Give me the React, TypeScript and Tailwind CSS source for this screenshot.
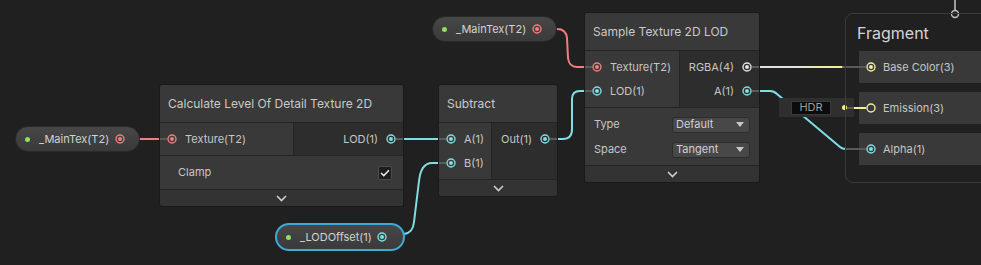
import React from 'react'

const RED = '#ef7f7f'
const CYAN = '#7fdde4'
const YELLOW = '#f3ef98'
const WHITE = '#e2e2e2'

function Ring({ color, hollow = false }: { color: string; hollow?: boolean }) {
  return (
    <svg width="10" height="10" viewBox="0 0 10 10" className="shrink-0">
      <circle cx="5" cy="5" r="4" fill="none" stroke={color} strokeWidth="1.4" />
      {!hollow && <circle cx="5" cy="5" r="2" fill={color} />}
    </svg>
  )
}

function Stub() {
  return <div className="h-[2px] w-[7px] shrink-0 bg-[#5a5a5a]" />
}

function InPort({ label, color }: { label: string; color: string }) {
  return (
    <div className="flex h-6 items-center">
      <Stub />
      <Ring color={color} />
      <span className="ml-2">{label}</span>
    </div>
  )
}

function OutPort({ label, color }: { label: string; color: string }) {
  return (
    <div className="flex h-6 items-center justify-end">
      <span className="mr-2">{label}</span>
      <Ring color={color} />
      <Stub />
    </div>
  )
}

function Chevron() {
  return (
    <div className="flex h-4 items-center justify-center bg-[#333333]">
      <svg width="11" height="7" viewBox="0 0 11 7">
        <polyline points="1,1 5.5,5.5 10,1" fill="none" stroke="#cfcfcf" strokeWidth="1.6" />
      </svg>
    </div>
  )
}

function Title({ text }: { text: string }) {
  return (
    <div className="flex h-[38px] items-center border-b border-[#242424] bg-[#393939] pl-2 text-[12px] text-[#c9c9c9]">
      {text}
    </div>
  )
}

function Dropdown({ value }: { value: string }) {
  return (
    <div className="ml-auto flex h-4 w-[78px] items-center justify-between rounded-[3px] border border-[#2c2c2c] bg-[#484848] pl-[3px] pr-[5px] text-[11px] text-[#d0d0d0]">
      <span>{value}</span>
      <svg width="8" height="5" viewBox="0 0 8 5">
        <polygon points="0,0 8,0 4,5" fill="#c8c8c8" />
      </svg>
    </div>
  )
}

function Pill({ label, color, className, selected = false }: { label: string; color: string; className: string; selected?: boolean }) {
  return (
    <div
      className={`absolute flex items-center rounded-full bg-gradient-to-b from-[#474747] to-[#3a3a3a] text-[11px] text-[#d2d2d2] ${
        selected ? 'border-2 border-[#3fa9d6]' : 'border border-[#2a2a2a]'
      } ${className}`}
    >
      <div className="h-[5px] w-[5px] rounded-full bg-[#8ee05e]" />
      <span className="ml-[9px]">{label}</span>
      <div className="ml-auto">
        <Ring color={color} />
      </div>
    </div>
  )
}

function Edges() {
  return (
    <svg className="absolute inset-0" width="981" height="265" fill="none" strokeLinecap="round">
      <defs>
        <linearGradient id="rgba" gradientUnits="userSpaceOnUse" x1="790" y1="0" x2="842" y2="0">
          <stop offset="0" stopColor={WHITE} />
          <stop offset="1" stopColor={YELLOW} />
        </linearGradient>
      </defs>
      {/* _MainTex -> Texture */}
      <path d="M140,139 L160,139" stroke={RED} strokeWidth="2" />
      {/* LOD -> A */}
      <path d="M403,139 L439,139" stroke={CYAN} strokeWidth="2" />
      {/* _LODOffset -> B */}
      <path d="M404,234 Q413,233 414,222 L419,181 Q421,163 432,163 L439,163" stroke={CYAN} strokeWidth="2" />
      {/* Out -> LOD */}
      <path d="M557,139 L563,139 Q572,139 572,129 L572,99 Q572,91 580,91 L585,91" stroke={CYAN} strokeWidth="2" />
      {/* _MainTex -> Texture (sample) */}
      <path d="M557,29 Q566,29 567,38 L568,58 Q569,67 577,67 L585,67" stroke={RED} strokeWidth="2" />
      {/* RGBA -> Base Color */}
      <path d="M759,67 L843,67" stroke="url(#rgba)" strokeWidth="2" />
      <path d="M843,67 L859,67" stroke="#5a5a5a" strokeWidth="2" />
      {/* A -> Alpha */}
      <path d="M759,91 L770,91 Q774,91 777,94 L840,147 Q842,149 846,149" stroke={CYAN} strokeWidth="2" />
      <path d="M846,149 L859,149" stroke="#5a5a5a" strokeWidth="2" />
      {/* HDR -> Emission */}
      <path d="M854,108 L859,108" stroke={YELLOW} strokeWidth="2" />
      {/* vertex link */}
      <path d="M955,0 L955,10" stroke="#c4c4c4" strokeWidth="1.5" />
      <circle cx="955" cy="14" r="3.5" stroke="#c4c4c4" strokeWidth="1.4" fill="#202020" />
    </svg>
  )
}

function FragPort({ label, color, hollow = false, link = false }: { label: string; color: string; hollow?: boolean; link?: boolean }) {
  return (
    <div className="flex h-[32px] items-center bg-[#393939]">
      {link ? <div className="h-[2px] w-[7px] shrink-0" style={{ background: YELLOW }} /> : <Stub />}
      <Ring color={color} hollow={hollow} />
      <span className="ml-[7px]">{label}</span>
    </div>
  )
}

export default function App() {
  return (
    <div
      className="relative h-[265px] w-[981px] overflow-hidden bg-[#202020] text-[11px] text-[#c6c6c6]"
      style={{ fontFamily: 'Inter, "Noto Sans", sans-serif' }}
    >
      <Edges />

      <Pill label="_MainTex(T2)" color={RED} className="left-[15px] top-[126px] h-[26px] w-[125px] pl-[9px] pr-[14px]" />
      <Pill label="_MainTex(T2)" color={RED} className="left-[432px] top-[16px] h-[26px] w-[125px] pl-[9px] pr-[14px]" />
      <Pill label="_LODOffset(1)" color={CYAN} selected className="left-[275px] top-[223px] h-[28px] w-[130px] pl-[9px] pr-[16px]" />

      {/* Calculate Level Of Detail Texture 2D */}
      <div className="absolute left-[160px] top-[85px] w-[243px] overflow-hidden rounded-[2px] shadow-[0_0_0_1px_#1a1a1a]">
        <Title text="Calculate Level Of Detail Texture 2D" />
        <div className="flex border-b border-[#242424]">
          <div className="w-[134px] border-r border-[#242424] bg-[#393939] py-1">
            <InPort label="Texture(T2)" color={RED} />
          </div>
          <div className="flex-1 bg-[#2d2d2d] py-1">
            <OutPort label="LOD(1)" color={CYAN} />
          </div>
        </div>
        <div className="flex h-[34px] items-center border-b border-[#242424] bg-[#393939] pl-[18px] pr-[11px]">
          <span>Clamp</span>
          <div className="ml-auto flex h-[14px] w-[14px] items-center justify-center rounded-[2px] border border-[#4c4c4c] bg-[#1e1e1e]">
            <svg width="10" height="8" viewBox="0 0 10 8">
              <polyline points="1,4 3.8,6.6 9,1.2" fill="none" stroke="#e8e8e8" strokeWidth="1.5" />
            </svg>
          </div>
        </div>
        <Chevron />
      </div>

      {/* Subtract */}
      <div className="absolute left-[439px] top-[85px] w-[118px] overflow-hidden rounded-[2px] shadow-[0_0_0_1px_#1a1a1a]">
        <Title text="Subtract" />
        <div className="flex border-b border-[#242424]">
          <div className="w-[53px] border-r border-[#242424] bg-[#393939] py-1">
            <InPort label="A(1)" color={CYAN} />
            <InPort label="B(1)" color={CYAN} />
          </div>
          <div className="flex-1 bg-[#2d2d2d] py-1">
            <OutPort label="Out(1)" color={CYAN} />
          </div>
        </div>
        <Chevron />
      </div>

      {/* Sample Texture 2D LOD */}
      <div className="absolute left-[585px] top-[13px] w-[174px] overflow-hidden rounded-[2px] shadow-[0_0_0_1px_#1a1a1a]">
        <Title text="Sample Texture 2D LOD" />
        <div className="flex border-b border-[#242424]">
          <div className="w-[95px] border-r border-[#242424] bg-[#393939] py-1">
            <InPort label="Texture(T2)" color={RED} />
            <InPort label="LOD(1)" color={CYAN} />
          </div>
          <div className="flex-1 bg-[#2d2d2d] py-1">
            <OutPort label="RGBA(4)" color={WHITE} />
            <OutPort label="A(1)" color={CYAN} />
          </div>
        </div>
        <div className="border-b border-[#242424] bg-[#393939] pb-[3px] pl-[9px] pr-[9px] pt-1">
          <div className="flex h-[25px] items-center">
            <span>Type</span>
            <Dropdown value="Default" />
          </div>
          <div className="flex h-[25px] items-center">
            <span>Space</span>
            <Dropdown value="Tangent" />
          </div>
        </div>
        <Chevron />
      </div>

      {/* HDR */}
      <div className="absolute left-[779px] top-[98px] flex h-[19px] w-[75px] items-center bg-[#2f2f2f] pl-[12px]">
        <div className="flex h-[14px] w-[40px] items-center justify-center border border-[#3a3a3a] bg-[#0c0c0c] text-[11px] text-[#9c9c9c]">
          HDR
        </div>
        <div className="ml-[11px] h-[5px] w-[5px] rounded-full" style={{ background: YELLOW }} />
        <Stub />
      </div>

      {/* Fragment */}
      <div className="absolute left-[845px] top-[13px] h-[170px] w-[170px] rounded-lg border border-[#3b3b3b]">
        <div className="flex h-[37px] items-center pl-[11px] text-[16px] text-[#d4d4d4]">Fragment</div>
        <div className="ml-[13px] flex flex-col gap-[9px]">
          <FragPort label="Base Color(3)" color={YELLOW} />
          <FragPort label="Emission(3)" color={YELLOW} hollow link />
          <FragPort label="Alpha(1)" color={CYAN} />
        </div>
      </div>
    </div>
  )
}
